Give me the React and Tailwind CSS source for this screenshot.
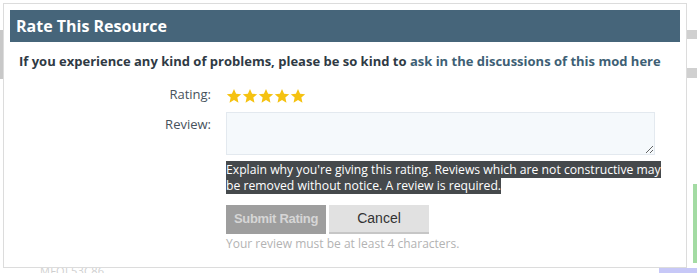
import React from "react";

const Star = () => (
  <svg width="16" height="16" viewBox="0 0 24 24" className="block">
    <path
      d="M12 1.5l3.1 7.1 7.7.7-5.8 5.1 1.7 7.6L12 18l-6.7 4 1.7-7.6-5.8-5.1 7.7-.7z"
      fill="#f5c211"
    />
  </svg>
);

const App = () => {
  return (
    <div
      className="relative w-[697px] h-[273px] bg-white overflow-hidden"
      style={{ fontFamily: '"Open Sans", sans-serif' }}
    >
      {/* faded page behind the overlay */}
      <div className="absolute left-0 top-[30px] w-[3px] h-[49px] bg-[#c8c8c8]" />
      <div className="absolute right-0 top-[30px] w-[10px] h-[9px] bg-[#d0d0d0]" />
      <div className="absolute right-0 top-[68px] w-[10px] h-[10px] bg-[#d0d0d0]" />
      <div className="absolute right-0 top-[184px] w-[4px] h-[79px] bg-[#a3dba3]" />
      <div className="absolute right-0 top-[268px] w-[38px] h-[5px] bg-[#c7c8f7]" />
      <div className="absolute left-[40px] top-[263px] text-[11px] text-[#cfcfcf] tracking-wide">
        MFQL53C86
      </div>

      {/* dialog */}
      <div className="absolute left-[3px] top-[3px] w-[684px] h-[265px] bg-white border border-[#dcdcdc] px-[6px] pt-[6px]">
        <div className="h-[32px] bg-[#46657a] flex items-center px-[6px]">
          <h2 className="text-white font-bold text-[16px] leading-none">Rate This Resource</h2>
        </div>

        <p className="mt-[10px] ml-[9px] text-[13px] font-bold text-[#2f3a44]">
          If you experience any kind of problems, please be so kind to{" "}
          <span className="text-[#3e5f75]">ask in the discussions of this mod here</span>
        </p>

        <div className="grid grid-cols-[201px_1fr] gap-x-[15px] mt-[10px] text-[13px]">
          <div className="text-right text-[#47525c] pt-[3px]">Rating:</div>
          <div className="flex pt-[6px] h-[30px]">
            <Star />
            <Star />
            <Star />
            <Star />
            <Star />
          </div>

          <div className="text-right text-[#47525c] pt-[3px]">Review:</div>
          <div>
            <textarea className="block w-[429px] h-[43px] bg-[#f5f9fc] border border-[#e3e9ef] resize-y" />
            <p className="mt-[7px] w-[436px] leading-[16px] text-[12.2px] text-white">
              <span className="bg-[#45494c] box-decoration-clone">
                Explain why you're giving this rating. Reviews which are not constructive may be removed without notice. A review is required.
              </span>
            </p>
            <div className="flex gap-[3px] mt-[11px]">
              <button
                className="w-[100px] h-[29px] bg-[#9e9e9e] text-[#d6d6d6] font-bold text-[13px] tracking-[-0.3px]"
                style={{ fontFamily: '"Liberation Sans", Arial, sans-serif' }}
              >
                Submit Rating
              </button>
              <button
                className="w-[100px] h-[29px] bg-[#e1e1e1] border-b-2 border-[#c6c6c6] text-[#333] text-[14px]"
                style={{ fontFamily: '"Liberation Sans", Arial, sans-serif' }}
              >
                Cancel
              </button>
            </div>
            <p className="mt-[1px] text-[12px] text-[#b3b3b3]">Your review must be at least 4 characters.</p>
          </div>
        </div>
      </div>
    </div>
  );
};

export default App;
